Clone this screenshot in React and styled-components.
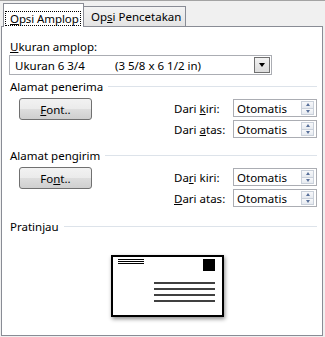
import React from 'react';
import styled, { createGlobalStyle } from 'styled-components';

const GlobalStyle = createGlobalStyle`
  body {
    margin: 0;
    background: #f0f0f0;
    font-family: "Segoe UI", "Noto Sans", sans-serif;
    font-size: 11.5px;
    color: #000;
  }
`;

export default function App() {
    return (
        <>
            <GlobalStyle />
            <Window>
                <TabRow>
                    <Tab active>
                        <FocusBox><U>O</U>psi Amplop</FocusBox>
                    </Tab>
                    <Tab>Op<U>s</U>i Pencetakan</Tab>
                </TabRow>
                <Panel>
                    <Label><U>U</U>kuran amplop:</Label>
                    <Select>
                        <SelectName>Ukuran 6 3/4</SelectName>
                        <span>(3 5/8 x 6 1/2 in)</span>
                        <DropButton />
                    </Select>

                    <SectionHeader gap={4}>Alamat penerima</SectionHeader>
                    <SectionBody>
                        <Button><U>F</U>ont..</Button>
                        <FieldGrid>
                            <span>Dari <U>k</U>iri:</span>
                            <SpinField />
                            <span>Dari <U>a</U>tas:</span>
                            <SpinField />
                        </FieldGrid>
                    </SectionBody>

                    <SectionHeader gap={10}>Alamat pengirim</SectionHeader>
                    <SectionBody>
                        <Button>Fo<U>n</U>t..</Button>
                        <FieldGrid>
                            <span>Da<U>r</U>i kiri:</span>
                            <SpinField />
                            <span><U>D</U>ari atas:</span>
                            <SpinField />
                        </FieldGrid>
                    </SectionBody>

                    <SectionHeader gap={12}>Pratinjau</SectionHeader>
                    <Envelope>
                        <svg width="113" height="62" viewBox="0 0 113 62">
                            <rect x="1" y="1" width="111" height="60" fill="#fff" stroke="#000" strokeWidth="2" />
                            <g stroke="#000" strokeWidth="1">
                                <line x1="7" y1="4.5" x2="33" y2="4.5" />
                                <line x1="7" y1="6.5" x2="33" y2="6.5" />
                                <line x1="7" y1="8.5" x2="33" y2="8.5" />
                            </g>
                            <rect x="92" y="4" width="12" height="12" fill="#000" />
                            <g stroke="#000" strokeWidth="1.6">
                                <line x1="43" y1="28" x2="104" y2="28" />
                                <line x1="43" y1="34" x2="104" y2="34" />
                                <line x1="43" y1="40" x2="104" y2="40" />
                                <line x1="43" y1="46" x2="104" y2="46" />
                            </g>
                        </svg>
                    </Envelope>
                </Panel>
            </Window>
        </>
    );
}

const SectionHeader = ({ gap, children }) => (
    <Header style={{ marginTop: gap }}>
        <span>{children}</span>
        <HeaderLine />
    </Header>
);

const SpinField = () => (
    <Field>
        <span>Otomatis</span>
        <Spinner>
            <SpinHalf><Arrow up /></SpinHalf>
            <SpinHalf><Arrow /></SpinHalf>
        </Spinner>
    </Field>
);

const Window = styled.div`
width: 325px; height: 337px; box-sizing: border-box;
border-top: 1px solid #a3a3a3;
padding: 2px 2px 1px 1px;
display: flex; flex-direction: column;
background: #f0f0f0;
`;

const TabRow = styled.div`
display: flex; align-items: flex-start;
height: 24px; padding-left: 2px;
margin-bottom: -1px;
position: relative; z-index: 1;
`;

const Tab = styled.div`
box-sizing: border-box;
border: 1px solid #898c95;
border-bottom: ${props => props.active ? "none" : "1px solid #898c95"};
background: ${props => props.active ? "#fff" : "linear-gradient(#f3f3f3, #e4e4e4)"};
height: ${props => props.active ? "24px" : "21px"};
margin-top: ${props => props.active ? "0" : "3px"};
padding: ${props => props.active ? "7px 2px 0 1px" : "2px 0 0 7px"};
margin-left: ${props => props.active ? "0" : "-1px"};
width: ${props => props.active ? "81px" : "103px"};
white-space: nowrap;
line-height: 15px;
`;

const FocusBox = styled.div`
box-sizing: border-box;
height: 15px; line-height: 13px;
border: 1px dotted #000;
padding-left: 4px;
letter-spacing: -0.1px;
`;

const U = styled.span`
text-decoration: underline;
`;

const Panel = styled.div`
flex: 1;
box-sizing: border-box;
background: #fff;
border: 1px solid #898c95;
padding: 0 5px 0 8px;
display: flex; flex-direction: column;
`;

const Label = styled.div`
margin-top: 12px;
line-height: 15px;
`;

const Select = styled.div`
box-sizing: border-box;
margin: 1px 0 0 -1px;
width: 263px; height: 20px;
border: 1px solid #abadb3;
display: flex; align-items: center;
padding-left: 5px;
`;

const SelectName = styled.span`
width: 100px;
`;

const DropButton = styled.div`
box-sizing: border-box;
margin: 0 1px 0 auto;
width: 16px; height: 16px;
border: 1px solid #707070;
background: linear-gradient(#f2f2f2, #dcdcdc);
display: flex; align-items: center; justify-content: center;
&::after {
    content: "";
    border-left: 3.5px solid transparent;
    border-right: 3.5px solid transparent;
    border-top: 4px solid #000;
}
`;

const Header = styled.div`
display: flex; align-items: center; gap: 5px;
height: 15px; line-height: 15px;
`;

const HeaderLine = styled.div`
flex: 1; height: 1px;
background: #dde3ea;
`;

const SectionBody = styled.div`
display: flex; align-items: flex-start;
margin-top: 5px;
`;

const Button = styled.div`
box-sizing: border-box;
width: 73px; height: 22px;
margin: -1px 0 0 9px;
border: 1px solid #707070;
border-radius: 3px;
background: linear-gradient(#f2f2f2 0%, #ebebeb 48%, #dddddd 52%, #cfcfcf 100%);
display: flex; align-items: center; justify-content: center;
`;

const FieldGrid = styled.div`
margin-left: auto;
display: grid;
grid-template-columns: 59px 84px;
row-gap: 3px;
align-items: center;
`;

const Field = styled.div`
box-sizing: border-box;
height: 18px;
border: 1px solid #abadb3;
display: flex; align-items: center;
padding-left: 3px;
`;

const Spinner = styled.div`
margin: 0 2px 0 auto;
width: 13px; height: 14px;
display: flex; flex-direction: column;
`;

const SpinHalf = styled.div`
flex: 1;
box-sizing: border-box;
border: 1px solid #c9d0da;
background: linear-gradient(#f8f9fb, #e6eaf0);
display: flex; align-items: center; justify-content: center;
& + & { border-top: none; }
`;

const Arrow = styled.div`
width: 0; height: 0;
border-left: 2.5px solid transparent;
border-right: 2.5px solid transparent;
border-top: ${props => props.up ? "none" : "3px solid #58709a"};
border-bottom: ${props => props.up ? "3px solid #58709a" : "none"};
`;

const Envelope = styled.div`
margin: 21px 0 0 101px;
width: 113px; height: 62px;
box-shadow: 1px 2px 4px rgba(0, 0, 0, 0.45);
svg { display: block; }
`;
